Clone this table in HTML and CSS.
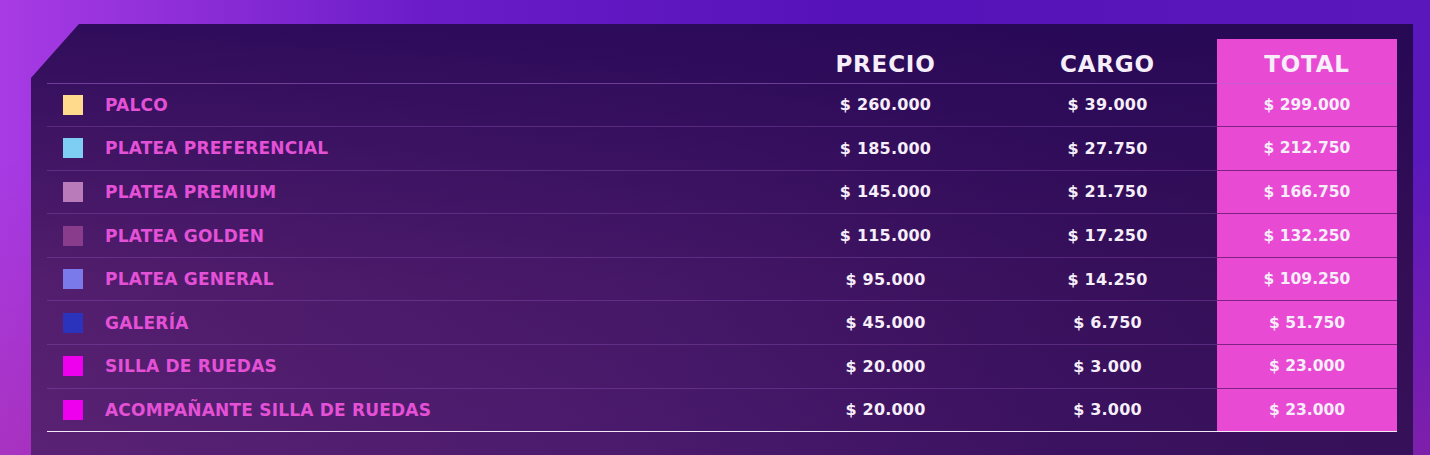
FILE: index.html
```html
<!DOCTYPE html>
<html lang="es">
<head>
<meta charset="utf-8">
<title>Precios</title>
<link rel="stylesheet" href="styles.css">
</head>
<body>
<div class="stage">
  <div class="panel">
    <table class="prices">
      <thead>
        <tr>
          <th class="c-name"></th>
          <th class="c-price">PRECIO</th>
          <th class="c-fee">CARGO</th>
          <th class="c-total">TOTAL</th>
        </tr>
      </thead>
      <tbody>
        <tr><td class="c-name"><span class="sw sw-palco"></span>PALCO</td><td class="c-price">$ 260.000</td><td class="c-fee">$ 39.000</td><td class="c-total">$ 299.000</td></tr>
        <tr><td class="c-name"><span class="sw sw-pref"></span>PLATEA PREFERENCIAL</td><td class="c-price">$ 185.000</td><td class="c-fee">$ 27.750</td><td class="c-total">$ 212.750</td></tr>
        <tr><td class="c-name"><span class="sw sw-prem"></span>PLATEA PREMIUM</td><td class="c-price">$ 145.000</td><td class="c-fee">$ 21.750</td><td class="c-total">$ 166.750</td></tr>
        <tr><td class="c-name"><span class="sw sw-gold"></span>PLATEA GOLDEN</td><td class="c-price">$ 115.000</td><td class="c-fee">$ 17.250</td><td class="c-total">$ 132.250</td></tr>
        <tr><td class="c-name"><span class="sw sw-gen"></span>PLATEA GENERAL</td><td class="c-price">$ 95.000</td><td class="c-fee">$ 14.250</td><td class="c-total">$ 109.250</td></tr>
        <tr><td class="c-name"><span class="sw sw-gal"></span>GALERÍA</td><td class="c-price">$ 45.000</td><td class="c-fee">$ 6.750</td><td class="c-total">$ 51.750</td></tr>
        <tr><td class="c-name"><span class="sw sw-silla"></span>SILLA DE RUEDAS</td><td class="c-price">$ 20.000</td><td class="c-fee">$ 3.000</td><td class="c-total">$ 23.000</td></tr>
        <tr><td class="c-name"><span class="sw sw-silla"></span>ACOMPAÑANTE SILLA DE RUEDAS</td><td class="c-price">$ 20.000</td><td class="c-fee">$ 3.000</td><td class="c-total">$ 23.000</td></tr>
      </tbody>
    </table>
  </div>
</div>
</body>
</html>
```
FILE: styles.css
```css
html, body {
  margin: 0;
  padding: 0;
}
body {
  width: 1430px;
  height: 455px;
  overflow: hidden;
  font-family: "DejaVu Sans", "Liberation Sans", sans-serif;
  background:
    linear-gradient(180deg, rgba(0,0,0,0) 35%, rgba(170,40,150,0.45) 100%),
    linear-gradient(90deg, #a83be4 0%, #6a1cc8 30%, #5512b8 60%, #5a18bc 100%);
}
.stage {
  padding: 24px 17px 0 31px;
}
.panel {
  height: 431px;
  padding: 15px 16px 0 16px;
  clip-path: polygon(48px 0, 100% 0, 100% 100%, 0 100%, 0 54px);
  background:
    linear-gradient(180deg, rgba(34,6,84,0.75) 0%, rgba(40,6,70,0.15) 60%, rgba(40,6,60,0) 100%),
    linear-gradient(90deg, #5a2274 0%, #4a1a6c 45%, #3b1260 75%, #361058 100%);
  box-sizing: border-box;
}
.prices {
  width: 1350px;
  border-collapse: collapse;
  table-layout: fixed;
  border-bottom: 1px solid #f2e8f6;
}
.prices th {
  height: 44px;
  padding: 0;
  font-size: 23px;
  letter-spacing: 0.8px;
  font-weight: bold;
  color: #f6eef9;
  text-align: center;
  border-bottom: 1px solid rgba(170,110,210,0.5);
  vertical-align: middle;
  padding-top: 6px;
  box-sizing: border-box;
}
.prices td {
  height: 43.6px;
  padding: 0;
  font-size: 16px;
  letter-spacing: 0.2px;
  font-weight: bold;
  color: #f6eef9;
  text-align: center;
  border-bottom: 1px solid rgba(150,90,190,0.35);
  box-sizing: border-box;
  vertical-align: middle;
}
.prices tbody tr:last-child td {
  border-bottom: none;
}
.c-name { width: 726px; }
.c-price { width: 225px; }
.c-fee { width: 219px; }
.c-total { width: 180px; }
.prices td.c-name {
  text-align: left;
  padding-left: 16px;
  font-size: 17px;
  letter-spacing: 0.2px;
  color: #e451d6;
}
.prices .c-total {
  background: #e84ad4;
}
.prices td.c-total {
  font-size: 15.5px;
  letter-spacing: 0;
  border-bottom: 1px solid #7e2284;
}
.sw {
  display: inline-block;
  width: 20px;
  height: 20px;
  margin-right: 22px;
  vertical-align: -4px;
}
.sw-palco { background: #ffd98c; }
.sw-pref { background: #7ecdf2; }
.sw-prem { background: #b97bba; }
.sw-gold { background: #8a3c8c; }
.sw-gen { background: #7a7aea; }
.sw-gal { background: #2b32bb; }
.sw-silla { background: #ee00ee; }
```
